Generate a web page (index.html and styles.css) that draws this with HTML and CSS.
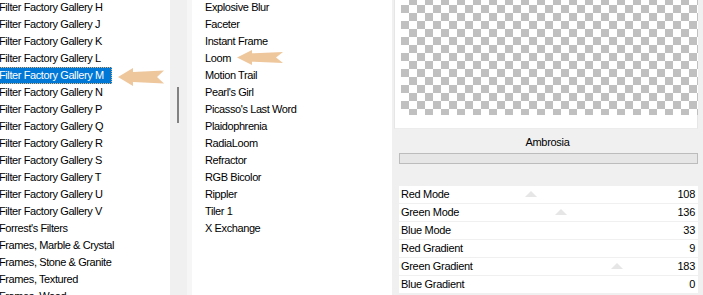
FILE: index.html
```html
<!DOCTYPE html>
<html lang="en">
<head>
  <meta charset="UTF-8">
  <title>Filters Unlimited</title>
  <link rel="stylesheet" href="styles.css">
</head>
<body>
  <div class="dialog">
    <!-- category list -->
    <div class="cat-list">
      <ul class="list">
        <li>Filter Factory Gallery H</li>
        <li>Filter Factory Gallery J</li>
        <li>Filter Factory Gallery K</li>
        <li>Filter Factory Gallery L</li>
        <li><span class="sel">Filter Factory Gallery M</span></li>
        <li>Filter Factory Gallery N</li>
        <li>Filter Factory Gallery P</li>
        <li>Filter Factory Gallery Q</li>
        <li>Filter Factory Gallery R</li>
        <li>Filter Factory Gallery S</li>
        <li>Filter Factory Gallery T</li>
        <li>Filter Factory Gallery U</li>
        <li>Filter Factory Gallery V</li>
        <li>Forrest's Filters</li>
        <li>Frames, Marble &amp; Crystal</li>
        <li>Frames, Stone &amp; Granite</li>
        <li>Frames, Textured</li>
        <li>Frames, Wood</li>
      </ul>
      <svg class="pointer pointer-cat" viewBox="0 0 46 18" width="46" height="18">
        <path d="M0 9 L15 0 L15 4 L46 2.5 L39 9 L46 15.5 L15 14 L15 18 Z"/>
      </svg>
    </div>

    <div class="scroll"><div class="thumb"></div></div>

    <!-- filter list -->
    <div class="filter-list">
      <ul class="list">
        <li>Explosive Blur</li>
        <li>Faceter</li>
        <li>Instant Frame</li>
        <li>Loom</li>
        <li>Motion Trail</li>
        <li>Pearl's Girl</li>
        <li>Picasso's Last Word</li>
        <li>Plaidophrenia</li>
        <li>RadiaLoom</li>
        <li>Refractor</li>
        <li>RGB Bicolor</li>
        <li>Rippler</li>
        <li>Tiler 1</li>
        <li>X Exchange</li>
      </ul>
      <svg class="pointer pointer-filter" viewBox="0 0 46 18" width="46" height="15" preserveAspectRatio="none">
        <path d="M0 9 L15 0 L15 4 L46 2.5 L39 9 L46 15.5 L15 14 L15 18 Z"/>
      </svg>
    </div>

    <!-- preview and parameters -->
    <div class="pane">
      <div class="preview"><div class="checker"></div></div>
      <div class="filter-name">Ambrosia</div>
      <div class="progress"></div>
      <div class="params">
        <div class="param"><span>Red Mode</span><span>108</span><i class="thumb-mark" style="left: 126px"></i></div>
        <div class="param"><span>Green Mode</span><span>136</span><i class="thumb-mark" style="left: 156px"></i></div>
        <div class="param"><span>Blue Mode</span><span>33</span></div>
        <div class="param"><span>Red Gradient</span><span>9</span></div>
        <div class="param"><span>Green Gradient</span><span>183</span><i class="thumb-mark" style="left: 212px"></i></div>
        <div class="param"><span>Blue Gradient</span><span>0</span></div>
      </div>
    </div>
  </div>
</body>
</html>
```

FILE: styles.css
```css
/* Base */
body {
  margin: 0;
  background-color: #f0f0f0;
  font-family: "Liberation Sans", Arial, sans-serif;
  font-size: 11px;
  color: #000;
}
.dialog {
  display: flex;
  width: 703px;
  height: 295px;
  overflow: hidden;
}
/* Lists */
.list {
  list-style: none;
  margin: -1px 0 0 0;
  padding: 0;
}
.list li {
  height: 17px;
  line-height: 17px;
  white-space: nowrap;
  letter-spacing: -0.4px;
}
.cat-list {
  position: relative;
  width: 170px;
  background-color: #fff;
  overflow: hidden;
}
.cat-list .list {
  margin-left: -1px;
}
.sel {
  display: inline-block;
  height: 17px;
  padding: 0 8px 0 0;
  background-color: #0078d7;
  color: #fff;
  outline: 1px dotted #f3b66d;
  outline-offset: -1px;
}
.scroll {
  width: 22px;
  background: linear-gradient(to right, #f0f0f0 17px, #f6f6f6 17px);
}
.scroll .thumb {
  width: 2px;
  height: 36px;
  margin: 87px 0 0 7px;
  background-color: #828282;
}
.filter-list {
  position: relative;
  width: 187px;
  padding-left: 13px;
  background-color: #fff;
}
/* Pointer arrows */
.pointer {
  position: absolute;
  fill: #eec79d;
}
.pointer-cat {
  left: 118px;
  top: 68px;
}
.pointer-filter {
  left: 45px;
  top: 50px;
}
/* Right pane */
.pane {
  width: 311px;
  display: flex;
  flex-direction: column;
}
.preview {
  width: 304px;
  height: 129px;
  margin-left: 2px;
  padding-left: 6px;
  box-sizing: border-box;
  background-color: #fff;
  border-left: 1px solid #e6e6e6;
  border-right: 1px solid #e6e6e6;
  border-bottom: 1px solid #ececec;
}
.checker {
  width: 297px;
  height: 115px;
  background-color: #fff;
  background-image: conic-gradient(#c0c0c0 25%, #fff 0 50%, #c0c0c0 0 75%, #fff 0);
  background-size: 16px 16px;
  background-position: 0 -3px;
}
.filter-name {
  height: 24px;
  line-height: 26px;
  text-align: center;
  letter-spacing: -0.3px;
}
.progress {
  height: 9px;
  margin: 0 5px 0 7px;
  background-color: #e6e6e6;
  border: 1px solid #bcbcbc;
}
.params {
  margin: 22px 5px 0 7px;
}
.param {
  position: relative;
  display: flex;
  justify-content: space-between;
  height: 17px;
  line-height: 17px;
  margin-bottom: 1px;
  padding: 0 3px 0 2px;
  background-color: #fff;
  letter-spacing: -0.3px;
}
.param span {
  position: relative;
  z-index: 1;
}
.thumb-mark {
  position: absolute;
  top: 5px;
  width: 0;
  height: 0;
  border-left: 6px solid transparent;
  border-right: 6px solid transparent;
  border-bottom: 6px solid #e6e6e6;
}
```
